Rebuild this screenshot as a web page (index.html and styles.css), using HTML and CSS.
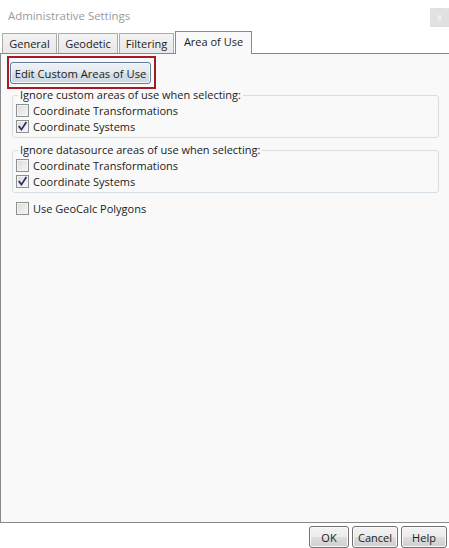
FILE: index.html
```html
<!DOCTYPE html>
<html>
<head>
<meta charset="utf-8">
<link rel="stylesheet" href="styles.css">
</head>
<body>
<div class="window">
  <div class="titlebar">
    <span class="title">Administrative Settings</span>
    <span class="close">x</span>
  </div>
  <div class="tabs">
    <div class="tab t-general">General</div>
    <div class="tab t-geodetic">Geodetic</div>
    <div class="tab t-filtering">Filtering</div>
    <div class="tab tab-active t-area">Area of Use</div>
  </div>
  <div class="panel">
    <div class="highlight">
      <button class="btn btn-default">Edit Custom Areas of Use</button>
    </div>
    <fieldset class="group group-first">
      <legend>Ignore custom areas of use when selecting:</legend>
      <label class="row"><span class="cb"></span>Coordinate Transformations</label>
      <label class="row"><span class="cb cb-checked"><svg viewBox="0 0 11 11" width="11" height="11"><path d="M2.2 5.6 L4.4 8.6 L8.9 1.8" fill="none" stroke="#222e66" stroke-width="1.7" stroke-linecap="square" stroke-linejoin="miter"/></svg></span>Coordinate Systems</label>
    </fieldset>
    <fieldset class="group group-second">
      <legend>Ignore datasource areas of use when selecting:</legend>
      <label class="row"><span class="cb"></span>Coordinate Transformations</label>
      <label class="row"><span class="cb cb-checked"><svg viewBox="0 0 11 11" width="11" height="11"><path d="M2.2 5.6 L4.4 8.6 L8.9 1.8" fill="none" stroke="#222e66" stroke-width="1.7" stroke-linecap="square" stroke-linejoin="miter"/></svg></span>Coordinate Systems</label>
    </fieldset>
    <label class="row row-single"><span class="cb"></span>Use GeoCalc Polygons</label>
  </div>
  <div class="footer">
    <button class="btn btn-ok">OK</button>
    <button class="btn btn-cancel">Cancel</button>
    <button class="btn btn-help">Help</button>
  </div>
</div>
</body>
</html>
```
FILE: styles.css
```css
* { box-sizing: border-box; }
html, body { margin: 0; padding: 0; }
body {
  background: #ffffff;
  font-family: "Open Sans", "Noto Sans", sans-serif;
  font-size: 11px;
  color: #1b1b1b;
  width: 449px;
  height: 548px;
  overflow: hidden;
}
.window {
  width: 449px;
  height: 548px;
  display: flex;
  flex-direction: column;
}
.titlebar {
  height: 31px;
  display: flex;
  align-items: flex-start;
  justify-content: space-between;
}
.title {
  margin: 8px 0 0 8px;
  font-size: 11.4px;
  line-height: 16px;
  color: #9a9a9a;
}
.close {
  margin-top: 8px;
  width: 19px;
  height: 19px;
  background: #e1e1e1;
  color: #f7f7f7;
  font-size: 10px;
  line-height: 18px;
  text-align: center;
}
.tabs {
  height: 22px;
  display: flex;
  align-items: flex-end;
  gap: 1px;
  padding-left: 2px;
  position: relative;
  z-index: 2;
}
.tab {
  height: 20px;
  border: 1px solid #acacac;
  border-bottom: none;
  background: linear-gradient(#f3f3f3, #e8e8e8);
  line-height: 19px;
  text-align: center;
  font-size: 11px;
  color: #1b1b1b;
}
.t-general { width: 55px; }
.t-geodetic { width: 60px; }
.t-filtering { width: 55px; }
.t-area { width: 77px; }
.tab-active {
  height: 23px;
  margin-bottom: -1px;
  background: #f9f9f9;
  border-color: #898989;
  line-height: 20px;
}
.panel {
  height: 470px;
  border-top: 1px solid #898989;
  border-left: 1px solid #898989;
  border-bottom: 1px solid #898989;
  background: #f9f9f9;
  padding: 2px 0 0 15px;
  display: flex;
  flex-direction: column;
  align-items: flex-start;
}
.highlight {
  margin-left: -9px;
  width: 149px;
  height: 33px;
  border: 2px solid #a21c22;
  padding: 4px 0 0 1px;
}
.btn {
  font-family: inherit;
  font-size: 11px;
  color: #1b1b1b;
  height: 22px;
  padding: 0;
  white-space: nowrap;
  border: 1px solid #707070;
  border-radius: 3px;
  background: linear-gradient(#f3f3f3 0%, #ebebeb 48%, #dddddd 52%, #cfcfcf 100%);
  box-shadow: inset 0 0 0 1px #fbfbfb;
}
.btn-default {
  width: 141px;
  border-color: #5f7d98;
  background: linear-gradient(#edf2f6 0%, #e3eaef 48%, #d7e0e7 52%, #cdd8e0 100%);
  box-shadow: inset 0 0 0 1px #f4f8fb;
  font-size: 11.2px;
}
.group {
  margin: 0;
  padding: 0 0 3px 3px;
  border: 1px solid #d5dfe5;
  border-radius: 3px;
  width: 427px;
  margin-left: -4px;
}
.group legend {
  margin-left: 2px;
  padding: 0 2px;
  line-height: 14px;
  font-size: 11px;
  color: #1b1b1b;
}
.group-first { margin-top: -1px; }
.group-second { margin-top: 5px; }
.row {
  display: flex;
  align-items: center;
  height: 16px;
  gap: 4px;
  color: #1b1b1b;
}
.row-single { margin-top: 7px; }
.cb {
  width: 13px;
  height: 13px;
  border: 1px solid #8e8f8f;
  background: linear-gradient(135deg, #dcdcdc, #f6f6f6);
  box-shadow: inset 0 0 0 1px #f4f4f4;
  display: flex;
  align-items: center;
  justify-content: center;
}
.cb-checked svg { display: block; }
.footer {
  flex: 1;
  display: flex;
  justify-content: flex-end;
  align-items: flex-start;
  gap: 3px;
  padding: 3px 2px 0 0;
}
.btn-ok { width: 40px; }
.btn-cancel { width: 46px; }
.btn-help { width: 46px; }
```
